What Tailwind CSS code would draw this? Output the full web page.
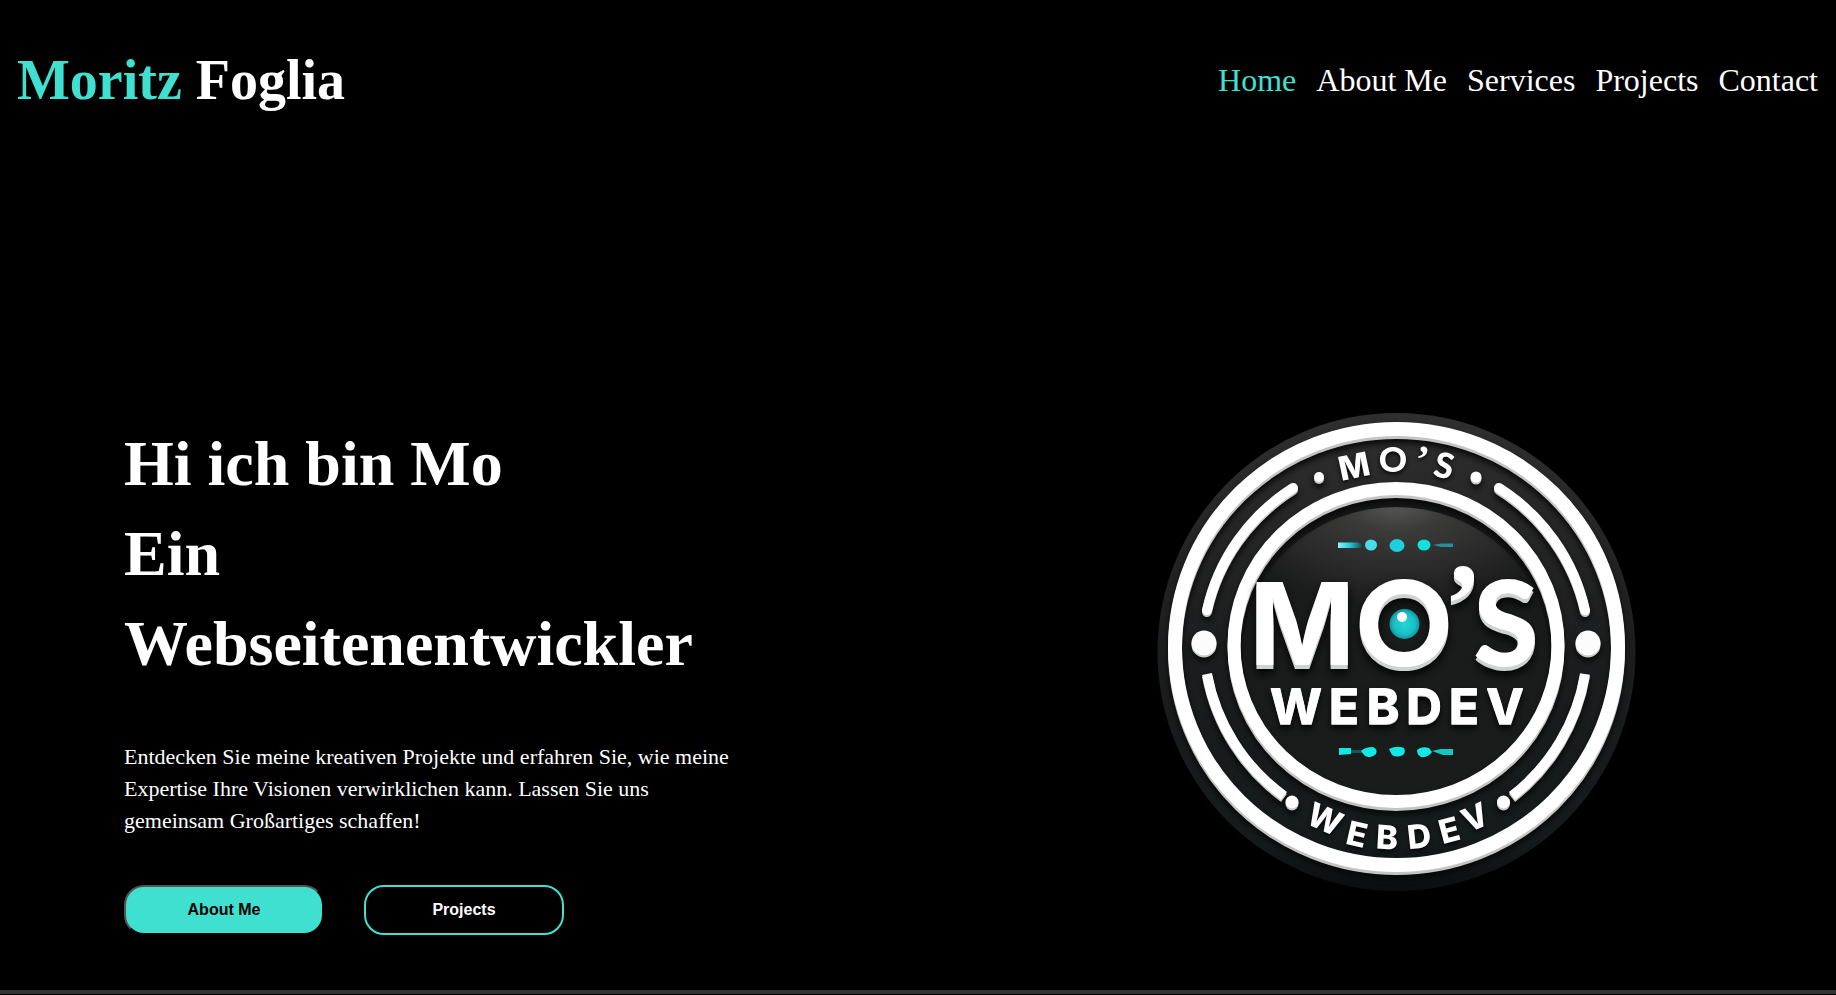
<!DOCTYPE html>
<html lang="de">
<head>
<meta charset="utf-8">
<meta name="viewport" content="width=device-width, initial-scale=1">
<title>Moritz Foglia</title>
<script src="https://cdn.jsdelivr.net/npm/@tailwindcss/browser@4"></script>
</head>
<body class="flex min-h-screen flex-col bg-black pb-px font-['Liberation_Serif',serif] text-white">
<header class="flex items-center justify-between pr-[18px] pl-[17px] pt-12">
  <h1 class="text-[56px] leading-16 font-bold"><span class="text-[#40e0d0]">Moritz</span> Foglia</h1>
  <nav aria-label="Main">
    <ul class="flex gap-5 text-[32px] leading-9">
      <li><a href="#home" class="text-[#40e0d0]">Home</a></li>
      <li><a href="#about">About Me</a></li>
      <li><a href="#services">Services</a></li>
      <li><a href="#projects">Projects</a></li>
      <li><a href="#contact">Contact</a></li>
    </ul>
  </nav>
</header>

<main class="flex flex-1 items-end justify-between border-b-4 border-[#333] pr-[192px] pl-[124px]">
  <section class="w-[624px] pb-[55px]">
    <h2 class="text-[64px] leading-[90px] font-bold">Hi ich bin Mo<br>Ein<br>Webseitenentwickler</h2>
    <p class="mt-[52px] text-[22px] leading-8">Entdecken Sie meine kreativen Projekte und erfahren Sie, wie meine Expertise Ihre Visionen verwirklichen kann. Lassen Sie uns gemeinsam Großartiges schaffen!</p>
    <div class="mt-12 flex gap-10 font-['Liberation_Sans',sans-serif] text-base font-bold">
      <button type="button" class="h-[50px] w-[200px] rounded-[20px] border-2 border-black bg-[#40e0d0] text-black [border-style:outset]">About Me</button>
      <button type="button" class="h-[50px] w-[200px] rounded-[20px] border-2 border-[#40e0d0] bg-black text-white">Projects</button>
    </div>
  </section>

  <svg class="mb-[91px] w-[494px] shrink-0 font-['Inter',sans-serif]" viewBox="1150 405 494 494" role="img" aria-label="Mo's Webdev">
    <defs>
      <linearGradient id="badge" x1="0" y1="0" x2="0" y2="1">
        <stop offset="0" stop-color="#2f2f2f"/><stop offset=".5" stop-color="#1c1d1e"/><stop offset=".9" stop-color="#151b1b"/><stop offset="1" stop-color="#0a0e0e"/>
      </linearGradient>
      <radialGradient id="face" gradientUnits="userSpaceOnUse" cx="1396" cy="500" r="180" gradientTransform="translate(0 200) scale(1 .6)">
        <stop offset="0" stop-color="#5a5a58"/><stop offset=".3" stop-color="#3a3a39"/><stop offset=".75" stop-color="#262626"/><stop offset="1" stop-color="#1a1b1b"/>
      </radialGradient>
      <radialGradient id="eye"><stop offset="0" stop-color="#25d5d8"/><stop offset=".7" stop-color="#1abfc4"/><stop offset="1" stop-color="#10969e"/></radialGradient>
      <linearGradient id="dash"><stop offset="0" stop-color="#8ff5f8"/><stop offset=".5" stop-color="#22c8dc"/><stop offset="1" stop-color="#1b4a4c"/></linearGradient>
    </defs>
    <circle cx="1396.500" cy="652" r="239" fill="url(#badge)"/>
    <ellipse cx="1396" cy="646" rx="158" ry="153" fill="#161718"/>
    <ellipse cx="1396" cy="652" rx="153" ry="145" fill="url(#face)"/>
    <g fill="none" stroke="#fff" style="filter:drop-shadow(0 3px 0 #c4c4c2) drop-shadow(0 4px 3px #080808)">
      <ellipse cx="1396.500" cy="647" rx="221.500" ry="218" stroke-width="14"/>
      <ellipse cx="1396" cy="645" rx="162" ry="156.500" stroke-width="13"/>
    </g>
    <g fill="none" stroke="#fff" stroke-width="10" style="filter:drop-shadow(0 2px 0 #c8c8c6) drop-shadow(0 4px 3px #080808)">
      <path d="M1293 488A195 195 0 0 0 1207 610M1499 488A195 195 0 0 1 1585 610" stroke-linecap="round"/>
      <path d="M1207 674A195 195 0 0 0 1284 796M1585 674A195 195 0 0 1 1512 796"/>
    </g>
    <g fill="#fcfcfc" style="filter:drop-shadow(0 2px 0 #c8c8c6) drop-shadow(0 4px 3px #080808)">
      <circle cx="1204" cy="643" r="12.500"/><circle cx="1588" cy="643" r="12.500"/>
      <circle cx="1319" cy="477" r="5"/><circle cx="1476" cy="477" r="5.500"/>
      <circle cx="1292" cy="802" r="6.500"/><circle cx="1503.500" cy="802" r="6.500"/>
    </g>
    <g>
      <path d="M1338 542.500h20l4 1.500v3l-4 1h-20z" fill="url(#dash)"/>
      <ellipse cx="1371" cy="545" rx="6" ry="5.500" fill="#4adbe6"/>
      <ellipse cx="1397" cy="545.500" rx="7.500" ry="6.500" fill="#1fd0dc"/>
      <ellipse cx="1424" cy="545" rx="6.500" ry="5.500" fill="#12e0dc"/>
      <path d="M1433 545l8-1.500h12v3.500h-12z" fill="#278f9b"/>
      <path d="M1339 748h12v6l-12 1z" fill="#12e8e0"/>
      <path d="M1351 750h12v3h-12z" fill="#125a5a"/>
      <path d="M1361 751q4-4 12-4q5 2 3 7q-5 5-11 2z" fill="#12e8e4"/>
      <path d="M1389 749q8-4 15-1q2 4-1 7q-6 3-11 0z" fill="#12e8e4"/>
      <path d="M1417 750q4-4 12-2l3 4q-4 6-11 5q-4-2-4-7z" fill="#12e8e4"/>
      <path d="M1432 751l9-2h12v6h-10z" fill="#12c9c6"/>
    </g>
    <g fill="#fff" text-anchor="middle" font-weight="700" font-size="119" style="filter:drop-shadow(0 4px 0 #cfd2d0) drop-shadow(0 5px 4px #050505)">
      <text x="1302" y="665" font-size="114">M</text>
      <text x="1404" y="666" font-family="Lato" font-weight="900">O</text>
      <text x="1463" y="644" font-family="Liberation Serif" font-size="116">’</text>
      <text x="1506" y="666" font-family="Lato" font-weight="900">S</text>
    </g>
    <circle cx="1404.500" cy="624" r="15" fill="url(#eye)"/><circle cx="1402" cy="617" r="5" fill="#fff"/>
    <g fill="#fff" text-anchor="middle" font-weight="800" font-size="50" style="filter:drop-shadow(0 1px 0 #c9cccc) drop-shadow(0 4px 3px #050505)">
      <text x="1296" y="724">W</text><text x="1344" y="724">E</text><text x="1383" y="724">B</text><text x="1424" y="724">D</text><text x="1464" y="724">E</text><text x="1505" y="724">V</text>
    </g>
    <g fill="#fff" text-anchor="middle" font-weight="800" font-size="33" style="filter:drop-shadow(0 2px 2px #050505)">
      <text transform="translate(1354 466) rotate(-12)" y="12">M</text>
      <text transform="translate(1393 460)" y="12" font-family="Lato" font-weight="900" font-size="35">O</text>
      <text transform="translate(1422 461) rotate(8)" y="12" font-family="Liberation Serif" font-size="40">’</text>
      <text transform="translate(1444 466) rotate(13)" y="12" font-family="Lato" font-weight="900" font-size="35">S</text>
    </g>
    <g fill="#fff" text-anchor="middle" font-weight="800" font-size="33" style="filter:drop-shadow(0 2px 2px #050505)">
      <text transform="translate(1325 819) rotate(24)" y="12">W</text>
      <text transform="translate(1357 834) rotate(13)" y="12">E</text>
      <text transform="translate(1387 837) rotate(3)" y="12">B</text>
      <text transform="translate(1419 836) rotate(-6)" y="12">D</text>
      <text transform="translate(1449 830) rotate(-15)" y="12">E</text>
      <text transform="translate(1475 817) rotate(-24)" y="12">V</text>
    </g>
  </svg>
</main>
</body>
</html>
